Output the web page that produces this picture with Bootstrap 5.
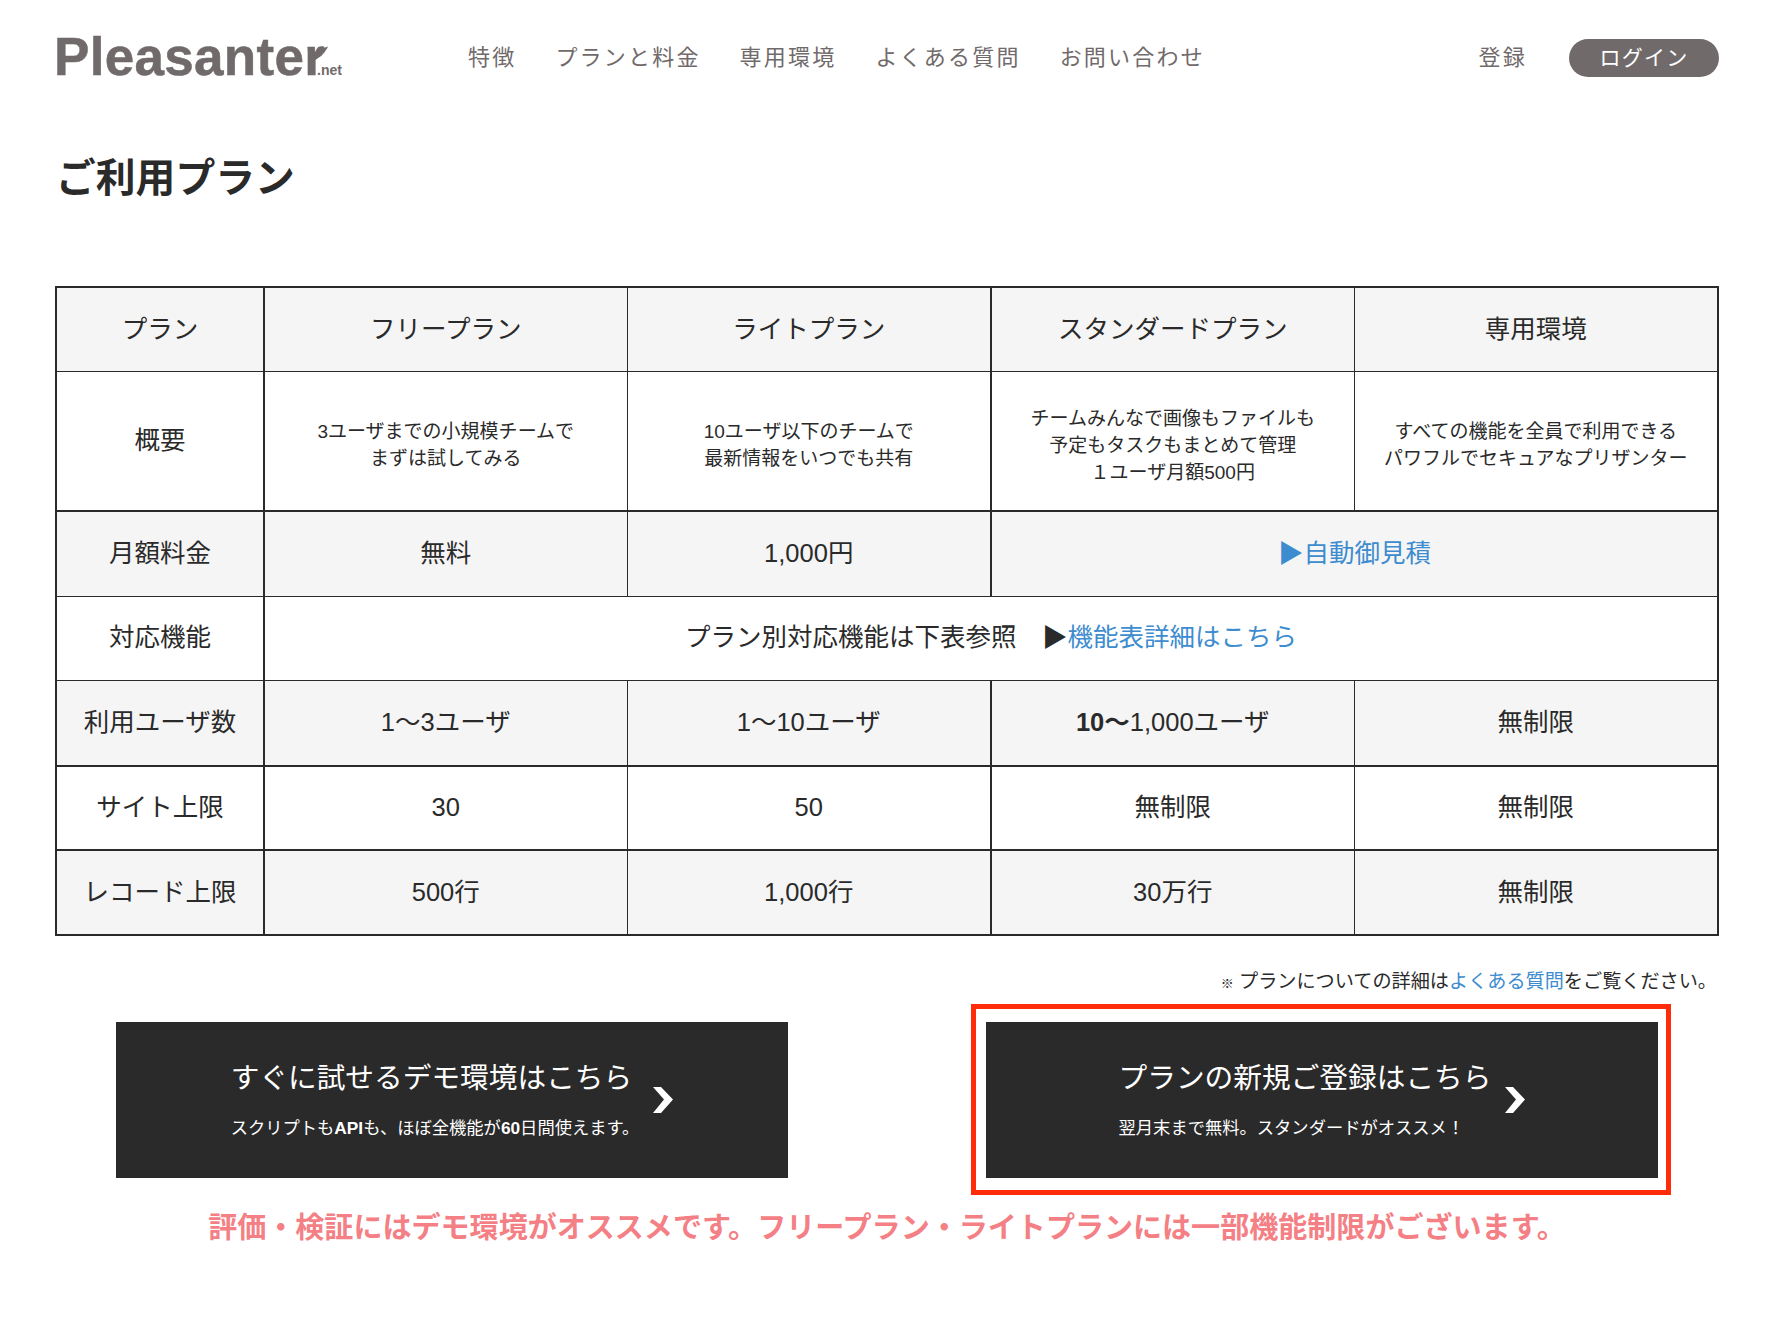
<!DOCTYPE html>
<html lang="ja">
<head>
<meta charset="utf-8">
<title>ご利用プラン</title>
<link href="https://cdn.jsdelivr.net/npm/bootstrap@5.3.0/dist/css/bootstrap.min.css" rel="stylesheet">
<style>
body{font-family:"Liberation Sans","Noto Sans CJK JP",sans-serif;color:#2a2a2a;background:#fff;font-weight:400}
.page-wrap{padding:0 57px 0 55px}
.top-bar{height:114px;padding-top:39px;align-items:flex-start;margin-right:-2px}
.logo-box{position:relative;width:414px;height:38px;margin:-1px 0 0 -1px;color:#716a6b;text-decoration:none}
.logo-word{font-weight:700;font-size:53px;line-height:38px;letter-spacing:.3px;display:block;color:#716a6b;-webkit-text-stroke:.5px #716a6b}
.logo-tail{letter-spacing:-9px}
.logo-net{position:absolute;left:263px;top:24px;font-size:14px;font-weight:700;line-height:16px;color:#716a6b}
.logo-quill{position:absolute;left:256px;top:7px;width:20px;height:20px}
.menu-link{font-size:22px;font-weight:400;letter-spacing:2.2px;color:#716a6b;text-decoration:none;line-height:38px;margin-right:39px}
.menu-right{margin-left:auto}
.login-pill{width:150px;height:38px;border-radius:19px;background:#716a6b;color:#fff;font-size:21px;letter-spacing:1.2px;line-height:38px;text-align:center;text-decoration:none;margin-left:42px;display:block}
.login-pill:hover{color:#fff}
.sign-link{margin-right:0}
.page-title{font-size:39.8px;font-weight:700;line-height:56px;margin:0;padding:36px 0 0 1px;height:172px;color:#2a2a2a}
.plan-table{table-layout:fixed;width:100%;margin:0;border-collapse:collapse;border:2px solid #2a2a2a;font-size:25.5px}
.plan-table td{border:1px solid #2a2a2a;text-align:center;vertical-align:middle;padding:0 0 2px;font-weight:400;height:84.8px;background:transparent;color:#2a2a2a;box-shadow:none}
.plan-table tr.shade td{background:#f5f5f5}
.plan-table td.thick-r{border-right-width:2px}
.plan-table tr.thick-b td{border-bottom-width:2px}
.plan-table tr.tall td{height:139.5px}
.plan-table td.desc-text{font-size:19px;line-height:27px;padding:8px 0 0}
.plan-table b{font-weight:700}
.blue-link{color:#3d8ccf;text-decoration:none}
.note-line{font-size:19.15px;font-weight:400;line-height:26px;text-align:right;padding:33px 0 0 0;height:86px;margin-right:-5px}
.note-mark{font-size:13px}
.cta-row{padding:0 59px 0 61px;justify-content:space-between}
.cta-box{position:relative;width:672px;height:156px;background:#2a2a2a;color:#fff;text-decoration:none;gap:14px;font-weight:400}
.cta-box:hover{color:#fff}
.cta-main{font-size:28.7px;line-height:40px;display:block}
.cta-sub{font-size:17.3px;line-height:28px;margin-top:16px;display:block}
.cta-sub b{font-weight:700}
.cta-arrow{width:20px;height:26px;flex:none}
.red-frame{position:absolute;left:-15px;right:-13px;top:-18px;bottom:-17px;border:5px solid #ff2c0a;pointer-events:none}
.warn-line{font-size:29.05px;font-weight:700;color:#f47f85;text-align:center;line-height:40px;margin:30px 0 0;padding-left:2px}
</style>
</head>
<body>
<div class="page-wrap">
  <nav class="d-flex top-bar">
    <a class="logo-box" href="#">
      <span class="logo-word">Pleasante<span class="logo-tail">r</span></span>
      <svg class="logo-quill" viewBox="0 0 20 20"><path d="M1 9C6 8 12 3 18 1.5C17 4 15.5 6 14.5 7L12 8L13.5 8.5C11 12 6 14 1 18Z" fill="#716a6b"/></svg>
      <span class="logo-net">.net</span>
    </a>
    <a class="menu-link" href="#">特徴</a>
    <a class="menu-link" href="#">プランと料金</a>
    <a class="menu-link" href="#">専用環境</a>
    <a class="menu-link" href="#">よくある質問</a>
    <a class="menu-link" href="#">お問い合わせ</a>
    <div class="d-flex menu-right">
      <a class="menu-link sign-link" href="#">登録</a>
      <a class="login-pill" href="#">ログイン</a>
    </div>
  </nav>

  <h1 class="page-title">ご利用プラン</h1>

  <table class="table plan-table">
    <colgroup><col style="width:208px"><col style="width:363px"><col style="width:364px"><col style="width:363px"><col style="width:364px"></colgroup>
    <tbody>
      <tr class="shade"><td class="thick-r">プラン</td><td>フリープラン</td><td class="thick-r">ライトプラン</td><td>スタンダードプラン</td><td>専用環境</td></tr>
      <tr class="tall thick-b"><td class="thick-r">概要</td><td class="desc-text">3ユーザまでの小規模チームで<br>まずは試してみる</td><td class="desc-text thick-r">10ユーザ以下のチームで<br>最新情報をいつでも共有</td><td class="desc-text">チームみんなで画像もファイルも<br>予定もタスクもまとめて管理<br>１ユーザ月額500円</td><td class="desc-text">すべての機能を全員で利用できる<br>パワフルでセキュアなプリザンター</td></tr>
      <tr class="shade"><td class="thick-r">月額料金</td><td>無料</td><td class="thick-r">1,000円</td><td colspan="2"><a class="blue-link" href="#">▶自動御見積</a></td></tr>
      <tr><td class="thick-r">対応機能</td><td colspan="4">プラン別対応機能は下表参照　▶<a class="blue-link" href="#">機能表詳細はこちら</a></td></tr>
      <tr class="shade thick-b"><td class="thick-r">利用ユーザ数</td><td>1〜3ユーザ</td><td class="thick-r">1〜10ユーザ</td><td><b>10〜</b>1,000ユーザ</td><td>無制限</td></tr>
      <tr class="thick-b"><td class="thick-r">サイト上限</td><td>30</td><td class="thick-r">50</td><td>無制限</td><td>無制限</td></tr>
      <tr class="shade"><td class="thick-r">レコード上限</td><td>500行</td><td class="thick-r">1,000行</td><td>30万行</td><td>無制限</td></tr>
    </tbody>
  </table>

  <p class="note-line m-0"><span class="note-mark">※</span> プランについての詳細は<a class="blue-link" href="#">よくある質問</a>をご覧ください。</p>

  <div class="d-flex cta-row">
    <a class="cta-box d-flex align-items-center justify-content-center" href="#">
      <span><span class="cta-main">すぐに試せるデモ環境はこちら</span><span class="cta-sub">スクリプトも<b>API</b>も、ほぼ全機能が<b>60</b>日間使えます。</span></span>
      <svg class="cta-arrow" viewBox="0 0 20 26"><path d="M0 0H8L20 12.5L8 26H0L11 12.5Z" fill="#fff"/></svg>
    </a>
    <a class="cta-box d-flex align-items-center justify-content-center" href="#">
      <span><span class="cta-main">プランの新規ご登録はこちら</span><span class="cta-sub">翌月末まで無料。スタンダードがオススメ！</span></span>
      <svg class="cta-arrow" viewBox="0 0 20 26"><path d="M0 0H8L20 12.5L8 26H0L11 12.5Z" fill="#fff"/></svg>
      <span class="red-frame"></span>
    </a>
  </div>

  <p class="warn-line">評価・検証にはデモ環境がオススメです。フリープラン・ライトプランには一部機能制限がございます。</p>
</div>
<script src="https://cdn.jsdelivr.net/npm/bootstrap@5.3.0/dist/js/bootstrap.bundle.min.js"></script>
</body>
</html>
